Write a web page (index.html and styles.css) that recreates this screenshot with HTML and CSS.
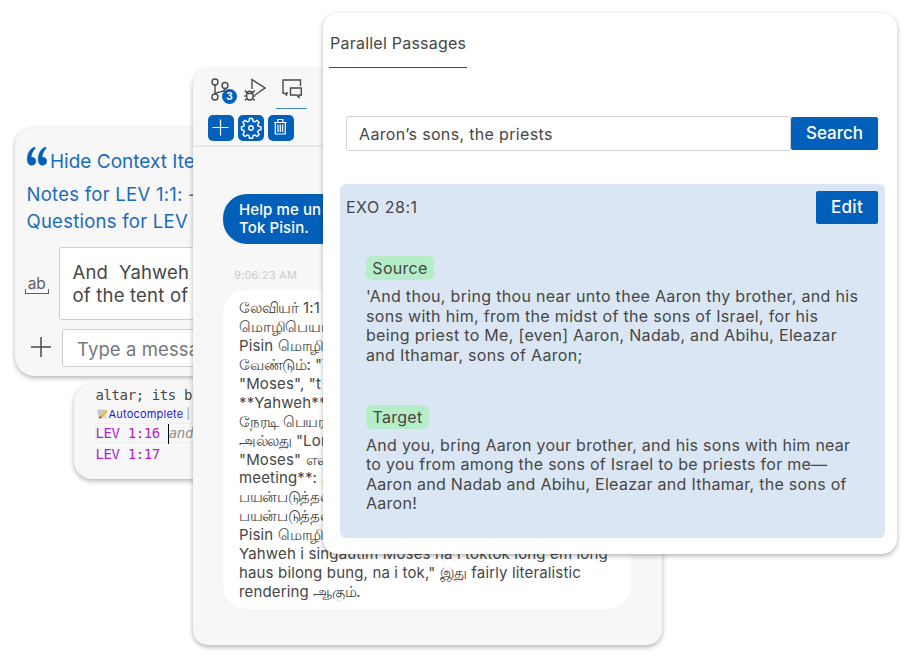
FILE: index.html
```html
<!DOCTYPE html>
<html lang="en">
<head>
<meta charset="utf-8">
<title>Parallel Passages</title>
<link rel="stylesheet" href="styles.css">
</head>
<body>
<main class="stage">
  <section class="card code">
    <div class="code-line">altar; its b</div>
    <div class="lens">
      <svg class="memo" viewBox="0 0 12 12"><path d="M1 1h8l2 9.500H2z" fill="#d9dde0"/><path d="M2 3h6M2 5h5M2.500 7h3" stroke="#929ca3" stroke-width=".6"/><path d="M10 2l2 1.500-6 6-3 1 .8-2.500z" fill="#f2b632"/><path d="M3 10.500l.8-2.500L6 9.500z" fill="#6b4a2a"/></svg><span>Autocomplete</span><i>|</i>
    </div>
    <div class="code-line current"><b>LEV 1:16</b><span class="caret"></span><em>and</em></div>
    <div class="code-line last"><b>LEV 1:17</b></div>
  </section>

  <section class="card context">
    <div class="hide-row">
      <svg class="quote" viewBox="0 0 20 19"><path d="M8.200 1C4 2.500 1.200 7 1.200 12.500c0 3.500 1.600 5.800 4.200 5.800 2.300 0 4-1.600 4-3.900 0-2.200-1.500-3.700-3.500-3.700-.4 0-.7 0-1 .1C5.200 7.500 6.500 4.500 8.900 2zM18.600 1c-4.200 1.500-7 6-7 11.500 0 3.500 1.600 5.800 4.200 5.800 2.300 0 4-1.600 4-3.900 0-2.200-1.500-3.700-3.500-3.700-.4 0-.7 0-1 .1.300-3.300 1.600-6.300 4-8.800z" fill="#0360ba" stroke="#0360ba" stroke-width=".4"/></svg>
      <span>Hide Context Ite</span>
    </div>
    <div class="link notes">Notes for LEV 1:1: -</div>
    <div class="link questions">Questions for LEV</div>
    <div class="source-row">
      <div class="ab"><span>ab</span></div>
      <div class="source-box"><div>And &nbsp;Yahweh</div><div>of the tent of</div></div>
    </div>
    <div class="message-row">
      <svg class="plus" viewBox="0 0 20 20"><path d="M10 0v20M0 10h20" stroke="#4a4a4a" stroke-width="1.500"/></svg>
      <div class="message-box">Type a messa</div>
    </div>
  </section>

  <section class="card chat">
    <header class="toolbar">
      <nav class="tabs">
        <div class="tab branch">
          <svg viewBox="0 0 24 24" width="24" height="24" fill="none" stroke="#4a4a4a" stroke-width="1.400"><circle cx="5" cy="4" r="3"/><circle cx="5" cy="19" r="3"/><circle cx="15" cy="7.500" r="3"/><path d="M5 7v9M15 10.500c0 4-5 2.500-10 5"/></svg>
          <span class="badge">3</span>
        </div>
        <div class="tab">
          <svg viewBox="0 0 22 24" width="22" height="24" fill="none" stroke="#4a4a4a" stroke-width="1.400"><path d="M8 11V1.500L21 10 11 17"/><path d="M2.700 17c0-5 6.200-5 6.200 0v2c0 4-6.200 4-6.200 0zM2.700 15.500h6.200M.8 12.500l2.500 2.500M10.800 12.500L8.300 15M.3 18h2.400M8.900 18h2.400M.8 22.500l2.500-2.500M10.800 22.500L8.300 20"/></svg>
        </div>
        <div class="tab active">
          <svg viewBox="0 0 20 20" width="20" height="20" fill="none" stroke="#4a4a4a" stroke-width="1.400"><path d="M6 14H4.500v2L2 14H1V1h17.500v6"/><path d="M8.500 9h10.800v7H17v2.300L14.500 16h-6z"/></svg>
        </div>
      </nav>
      <div class="actions">
        <span class="action"><svg viewBox="0 0 26 26"><path d="M12.500 4.500v16M4.500 12.500h16" stroke="#fff" stroke-width="1.200"/></svg></span>
        <span class="action"><svg viewBox="0 0 26 26" fill="none" stroke="#fff" stroke-width="1.400" stroke-linejoin="round"><path d="M11.500 3.500h3l.6 2.800 1.500.6 2.400-1.600 2.100 2.100-1.500 2.400.7 1.500 2.700.6v2.900l-2.700.6-.7 1.600 1.500 2.400-2.100 2.100-2.400-1.600-1.500.7-.6 2.700h-3l-.6-2.700-1.500-.7L7 21.500l-2.100-2.100 1.500-2.400-.6-1.600L3.500 14.800v-2.900l2.300-.6.6-1.500L4.900 7.400 7 5.300l2.400 1.600 1.500-.6z"/><circle cx="13" cy="13" r="2.200"/></svg></span>
        <span class="action"><svg viewBox="0 0 26 26" fill="none" stroke="#fff" stroke-width="1.200"><path d="M6 7.500h12.500M9.800 7.500v-3h5v3M7.300 7.500V19h10V7.500M10 9.500V17M12.300 9.500V17M14.600 9.500V17"/></svg></span>
      </div>
    </header>
    <div class="bubble user"><div>Help me un</div><div>Tok Pisin.</div></div>
    <time class="time">9:06:23 AM</time>
    <div class="bubble reply">
      <div><span class="ta">லேவியர்</span> 1:1</div>
      <div><span class="ta">மொழிபெயர்</span></div>
      <div>Pisin <span class="ta">மொழியி</span></div>
      <div><span class="ta">வேண்டும்:</span> "Y</div>
      <div>"Moses", "t</div>
      <div>**Yahweh**</div>
      <div><span class="ta">நேரடி பெயர</span></div>
      <div><span class="ta">அல்லது</span> "Lor</div>
      <div>"Moses" <span class="ta">என</span></div>
      <div>meeting**: .</div>
      <div><span class="ta">பயன்படுத்தல</span></div>
      <div><span class="ta">பயன்படுத்தல</span></div>
      <div>Pisin <span class="ta">மொழியி</span></div>
      <div>Yahweh i singautim Moses na i toktok long em long</div>
      <div>haus bilong bung, na i tok," <span class="ta">இது</span> fairly literalistic</div>
      <div>rendering <span class="ta">ஆகும்.</span></div>
    </div>
  </section>

  <section class="card passages">
    <h1 class="title">Parallel Passages</h1>
    <div class="search"><div class="field">Aaron’s sons, the priests</div><div class="button">Search</div></div>
    <article class="result">
      <header class="result-head"><span>EXO 28:1</span><div class="button edit">Edit</div></header>
      <div class="passage">
        <span class="tag">Source</span>
        <div class="verse">
          <div>'And thou, bring thou near unto thee Aaron thy brother, and his</div>
          <div>sons with him, from the midst of the sons of Israel, for his</div>
          <div>being priest to Me, [even] Aaron, Nadab, and Abihu, Eleazar</div>
          <div>and Ithamar, sons of Aaron;</div>
        </div>
      </div>
      <div class="passage target">
        <span class="tag">Target</span>
        <div class="verse">
          <div>And you, bring Aaron your brother, and his sons with him near</div>
          <div>to you from among the sons of Israel to be priests for me—</div>
          <div>Aaron and Nadab and Abihu, Eleazar and Ithamar, the sons of</div>
          <div>Aaron!</div>
        </div>
      </div>
    </article>
  </section>
</main>
</body>
</html>
```
FILE: styles.css
```css
* { box-sizing: border-box; }
body { margin: 0; background: #fff; color: #464646; font-family: Inter, "Liberation Sans", sans-serif; white-space: nowrap; }
svg { display: block; flex: none; }
.stage { position: relative; width: 912px; height: 664px; overflow: hidden; }
.card { position: absolute; overflow: hidden; border-radius: 15px; background: #f7f7f7; box-shadow: 0 2px 5px rgba(0,0,0,.3); }

/* Editor snippet */
.code { left: 74px; top: 384px; width: 180px; height: 95px; padding: 1px 0 0 21.500px; border-radius: 18px; }
.code-line { height: 20px; font: 14px/20px "DejaVu Sans Mono", monospace; letter-spacing: -.39px; display: flex; }
.code-line b { color: #b01fd0; font-weight: 400; }
.code-line em { color: #929292; }
.lens { height: 18px; display: flex; align-items: center; gap: 1px; font-size: 11px; letter-spacing: .2px; color: #1717f0; }
.lens i { color: #929292; font-style: normal; margin-left: 2px; }
.memo { width: 12px; height: 12px; }
.current { border: 1px solid #eee; line-height: 18px; margin-left: -1px; }
.caret { width: 1px; height: 20px; margin-left: 8px; background: #000; flex: none; }
.last { margin-top: 1px; }

/* Context panel */
.context { left: 15px; top: 127px; width: 240px; height: 249px; padding: 19px 0 0 11px; border-radius: 20px; }
.hide-row { display: flex; height: 30px; gap: 3px; color: #196bbd; font-size: 19px; line-height: 31px; }
.quote { width: 21px; height: 20px; }
.link { color: #196bbd; font-size: 18.500px; letter-spacing: .26px; line-height: 27px; height: 27px; padding-left: .5px; }
.notes { margin-top: 5px; }
.source-row { display: flex; margin-top: 12px; align-items: center; }
.ab { position: relative; width: 24px; height: 17px; margin: 4px 10px 0 -1px; border-bottom: 1.500px solid #606060; text-align: center; font-size: 15.500px; line-height: 14px; color: #606060; }
.ab::after { content: ""; position: absolute; left: 0; right: 0; bottom: 0; height: 4px; border: solid #606060; border-width: 0 1px; }
.source-box { width: 200px; height: 73px; padding: 13px; border: 1px solid #cecece; border-radius: 3px; background: #fff; font-size: 18.500px; letter-spacing: .2px; line-height: 22.500px; }
.message-row { display: flex; margin-top: 9px; align-items: center; }
.plus { width: 20px; height: 20px; margin: 0 11px 2px 5px; }
.message-box { width: 200px; height: 38px; padding: 1px 14px; border: 1px solid #cecece; border-radius: 3px; background: #fff; color: #777; font-size: 18.500px; letter-spacing: .1px; line-height: 36px; }

/* Chat panel */
.chat { left: 193px; top: 69px; width: 469px; height: 576px; }
.toolbar { height: 78px; padding: 5px 0 0 15px; border-bottom: 2px solid #e8e8e8; }
.tabs { display: flex; height: 35px; }
.tab { position: relative; width: 34px; padding: 4px 0 0 2px; }
.tab.active { width: 31px; border-bottom: 1px solid #3f83c8; padding: 5px 0 0 6px; }
.badge { position: absolute; left: 14px; top: 15px; width: 15px; height: 15px; border-radius: 50%; background: #0360ba; color: #fff; font-size: 10px; font-weight: 700; line-height: 15px; text-align: center; }
.actions { display: flex; gap: 4px; padding-top: 6px; }
.action { width: 26px; height: 26px; border-radius: 5px; background: #0360ba; }
.action svg { width: 26px; height: 26px; }
.bubble { border-radius: 24px; }
.user { width: 380px; height: 50px; margin: 47px 0 0 30px; padding: 7px 16px; background: #0360ba; color: #fff; font-size: 15px; font-weight: 500; letter-spacing: .1px; line-height: 18px; }
.time { display: block; margin: 24px 0 0 41px; height: 14px; font-size: 11px; letter-spacing: .2px; line-height: 14px; color: #ccc; }
.reply { width: 408px; height: 319px; margin: 8px 0 0 30px; padding: 9px 16px; background: #fff; font-size: 15px; letter-spacing: .15px; line-height: 18.950px; }
.reply > div { height: 18.950px; }
.ta { font-size: 15px; letter-spacing: -.35px; line-height: 1; }

/* Parallel passages panel */
.passages { left: 323px; top: 13px; width: 574px; height: 541px; padding: 20px 13px 0 6px; background: #fff; }
.title { width: 138px; height: 35px; margin: 0; padding-left: 1px; border-bottom: 1px solid #464646; font-size: 16px; font-weight: 400; letter-spacing: .23px; line-height: 20px; }
.search { display: flex; align-items: center; height: 35px; margin: 48px 0 0 17px; }
.field { width: 445px; height: 35px; padding-left: 12px; border: 1px solid #d5d5d5; border-radius: 2px; font-size: 16px; letter-spacing: .34px; line-height: 34px; }
.button { width: 87px; height: 33px; border-radius: 2px; background: #0360ba; color: #fff; font-size: 17px; font-weight: 500; line-height: 33px; text-align: center; }
.result { width: 545px; height: 354px; margin: 33px 0 0 11px; padding: 7px 7px 0 6px; border-radius: 6px; background: #dbe6f4; }
.result-head { display: flex; justify-content: space-between; font-size: 16px; letter-spacing: .5px; line-height: 33px; }
.edit { width: 62px; line-height: 33px; letter-spacing: .3px; }
.passage { height: 148.500px; padding: 32px 0 0 20px; }
.tag { display: block; width: 68px; height: 24px; border-radius: 6px; background: #b4edc7; font-size: 16px; letter-spacing: .3px; line-height: 24px; text-align: center; }
.target .tag { width: 63px; }
.verse { margin-top: 7px; font-size: 16px; letter-spacing: .31px; line-height: 19.600px; }
.target .verse { letter-spacing: .275px; }
```
